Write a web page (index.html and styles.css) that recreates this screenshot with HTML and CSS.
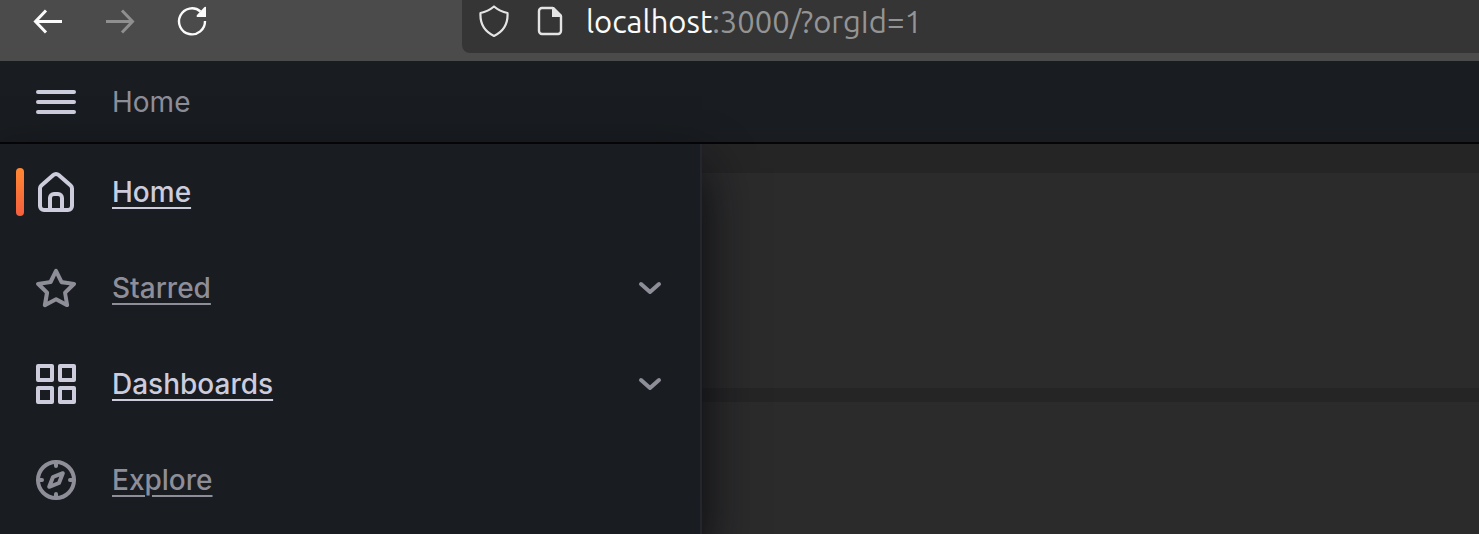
FILE: index.html
```html
<!DOCTYPE html>
<html lang="en">
<head>
<meta charset="utf-8">
<title>Home - Grafana</title>
<link rel="stylesheet" href="styles.css">
</head>
<body>
<div class="browser-bar">
  <div class="browser-actions">
    <button class="browser-button" type="button" aria-label="Back">
      <svg class="browser-icon" viewBox="0 0 32 32"><path d="M30 16.500H4M14 5.500L3.500 16.500l10.500 11" fill="none" stroke="currentColor" stroke-width="3"/></svg>
    </button>
    <button class="browser-button" type="button" aria-label="Forward" disabled>
      <svg class="browser-icon" viewBox="0 0 32 32"><path d="M2 16.500h26M18 5.500l10.500 11-10.500 11" fill="none" stroke="currentColor" stroke-width="3"/></svg>
    </button>
    <button class="browser-button" type="button" aria-label="Reload">
      <svg class="browser-icon" viewBox="0 0 32 32"><path d="M24.500 6.500A13 13 0 1 0 29 16" fill="none" stroke="currentColor" stroke-width="2.400"/><path d="M30 2v10H21q-1-1 0-2l7-7.500q1-1 2-.5z" fill="currentColor"/></svg>
    </button>
  </div>
  <div class="address">
    <div class="address-icons">
      <svg class="address-icon" viewBox="0 0 32 32"><path d="M16 1.500Q22 6.500 29.500 8Q30.500 24 16 31Q1.500 24 2.500 8Q10 6.500 16 1.500z" fill="none" stroke="currentColor" stroke-width="2.200" stroke-linejoin="round"/></svg>
      <svg class="address-icon" viewBox="0 0 32 32"><path d="M19 3H8a3 3 0 0 0-3 3v20a3 3 0 0 0 3 3h16a3 3 0 0 0 3-3V11" fill="none" stroke="currentColor" stroke-width="2.400"/><path d="M18 2h2l8 8v2H18z" fill="currentColor"/></svg>
    </div>
    <span class="url"><span class="url-host">localhost</span>:3000/?orgId=1</span>
  </div>
</div>
<header class="app-header">
  <button class="menu-button" type="button" aria-label="Close menu">
    <svg class="icon" viewBox="0 0 24 24"><path d="M3 7h18M3 12h18M3 17h18" stroke="currentColor" stroke-width="2" stroke-linecap="round"/></svg>
  </button>
  <span class="crumb">Home</span>
</header>
<div class="app-body">
  <nav class="menu" aria-label="Main menu">
    <div class="menu-row active">
      <svg class="icon" viewBox="0 0 24 24"><path fill="currentColor" d="M20,8h0L14,2.740a3,3,0,0,0-4,0L4,8a3,3,0,0,0-1,2.260V19a3,3,0,0,0,3,3H18a3,3,0,0,0,3-3V10.250A3,3,0,0,0,20,8ZM14,20H10V15a1,1,0,0,1,1-1h2a1,1,0,0,1,1,1Zm5-1a1,1,0,0,1-1,1H16V15a3,3,0,0,0-3-3H11a3,3,0,0,0-3,3v5H6a1,1,0,0,1-1-1V10.250a1,1,0,0,1,.34-.75l6-5.250a1,1,0,0,1,1.320,0l6,5.250a1,1,0,0,1,.34.75Z"/></svg>
      <a class="menu-link" href="#home">Home</a>
    </div>
    <div class="menu-row">
      <svg class="icon" viewBox="0 0 24 24"><path fill="currentColor" d="M22,9.670A1,1,0,0,0,21.140,9l-5.690-.83L12.900,3a1,1,0,0,0-1.800,0L8.550,8.160,2.860,9a1,1,0,0,0-.81.68,1,1,0,0,0,.25,1l4.130,4-1,5.680A1,1,0,0,0,6.900,21.440L12,18.770l5.100,2.670a.93.93,0,0,0,.46.12,1,1,0,0,0,.59-.19,1,1,0,0,0,.4-1l-1-5.680,4.130-4A1,1,0,0,0,22,9.670Zm-6.150,4a1,1,0,0,0-.29.88l.72,4.200-3.760-2a1.060,1.060,0,0,0-.94,0l-3.760,2,.72-4.200a1,1,0,0,0-.29-.88l-3-3,4.210-.61a1,1,0,0,0,.76-.55L12,5.700l1.880,3.820a1,1,0,0,0,.76.55l4.210.61Z"/></svg>
      <a class="menu-link" href="#starred">Starred</a>
      <button class="expand" type="button" aria-label="Expand Starred"><svg class="chevron" viewBox="0 0 24 24"><path d="M3 8l9 8 9-8" fill="none" stroke="currentColor" stroke-width="4" stroke-linecap="round" stroke-linejoin="round"/></svg></button>
    </div>
    <div class="menu-row bright">
      <svg class="icon" viewBox="0 0 24 24"><path d="M3 3h7v7H3zM14 3h7v7h-7zM3 14h7v7H3zM14 14h7v7h-7z" fill="none" stroke="currentColor" stroke-width="2" stroke-linejoin="round"/></svg>
      <a class="menu-link" href="#dashboards">Dashboards</a>
      <button class="expand" type="button" aria-label="Expand Dashboards"><svg class="chevron" viewBox="0 0 24 24"><path d="M3 8l9 8 9-8" fill="none" stroke="currentColor" stroke-width="4" stroke-linecap="round" stroke-linejoin="round"/></svg></button>
    </div>
    <div class="menu-row">
      <svg class="icon" viewBox="0 0 24 24"><g fill="none" stroke="currentColor" stroke-width="2"><circle cx="12" cy="12" r="9"/><path d="M12 3v2M12 19v2M3 12h2M19 12h2" stroke-linecap="round"/><path d="M15.400 8.600l-1.900 4.900-4.900 1.900 1.900-4.900z" stroke-linejoin="round"/></g></svg>
      <a class="menu-link" href="#explore">Explore</a>
    </div>
  </nav>
  <main class="dashboard">
    <section class="panel"></section>
    <section class="panel fill"></section>
  </main>
</div>
</body>
</html>
```
FILE: styles.css
```css
* {
  box-sizing: border-box;
}

body {
  margin: 0;
  min-height: 100vh;
  display: flex;
  flex-direction: column;
  background: #252526;
  font-family: Inter, Roboto, sans-serif;
  font-size: 28px;
  line-height: 44px;
  color: #8e8e99;
}

button {
  display: flex;
  padding: 0;
  border: 0;
  background: none;
  color: inherit;
}

svg {
  display: block;
  flex: none;
}

.browser-bar {
  display: flex;
  flex: none;
  padding-bottom: 8px;
  background: #4b4b4b;
  color: #fbfbfb;
}

.browser-actions {
  display: flex;
  flex: none;
  align-items: center;
  gap: 40px;
  width: 462px;
  padding: 0 32px 11px;
}

.browser-button:disabled {
  color: #8f8f8f;
}

.browser-icon,
.address-icon {
  width: 32px;
  height: 32px;
}

.address {
  display: flex;
  flex: 1;
  align-items: center;
  gap: 20px;
  padding: 0 16px 9px;
  border-bottom-left-radius: 8px;
  background: #353535;
}

.address-icons {
  display: flex;
  gap: 24px;
  padding-bottom: 2px;
  color: #e4e4e4;
}

.url {
  font-family: Ubuntu, "Noto Sans", sans-serif;
  font-size: 31px;
  white-space: nowrap;
  color: #949494;
}

.url-host {
  color: #fbfbfb;
}

.app-header {
  display: flex;
  flex: none;
  align-items: center;
  gap: 32px;
  height: 83px;
  padding-left: 32px;
  border-bottom: 2px solid #050507;
  background: #191c20;
}

.icon {
  width: 48px;
  height: 48px;
}

.menu-button {
  color: #ccccdc;
}

.app-body {
  display: flex;
  flex: 1;
}

.menu {
  position: relative;
  flex: none;
  width: 702px;
  border-right: 2px solid #24262d;
  background: #191c20;
  box-shadow: 0 24px 48px #08090d;
}

.menu-row {
  position: relative;
  display: flex;
  align-items: center;
  gap: 32px;
  height: 96px;
  padding: 0 38px 0 32px;
  font-weight: 500;
}

.active,
.bright {
  color: #ccccdc;
}

.active::before {
  content: "";
  position: absolute;
  left: 16px;
  width: 8px;
  height: 48px;
  border-radius: 4px;
  background: linear-gradient(#ff8833, #f55f3e);
}

.menu-link {
  color: inherit;
  text-decoration-thickness: 2px;
  text-underline-offset: 5px;
}

.expand {
  margin-left: auto;
  color: #8e8e99;
}

.chevron {
  width: 24px;
  height: 24px;
}

.dashboard {
  display: flex;
  flex: 1;
  flex-direction: column;
  gap: 14px;
  padding-top: 29px;
}

.panel {
  min-height: 215px;
  background: #2b2b2c;
}

.fill {
  flex: 1;
  min-height: 0;
}
```
